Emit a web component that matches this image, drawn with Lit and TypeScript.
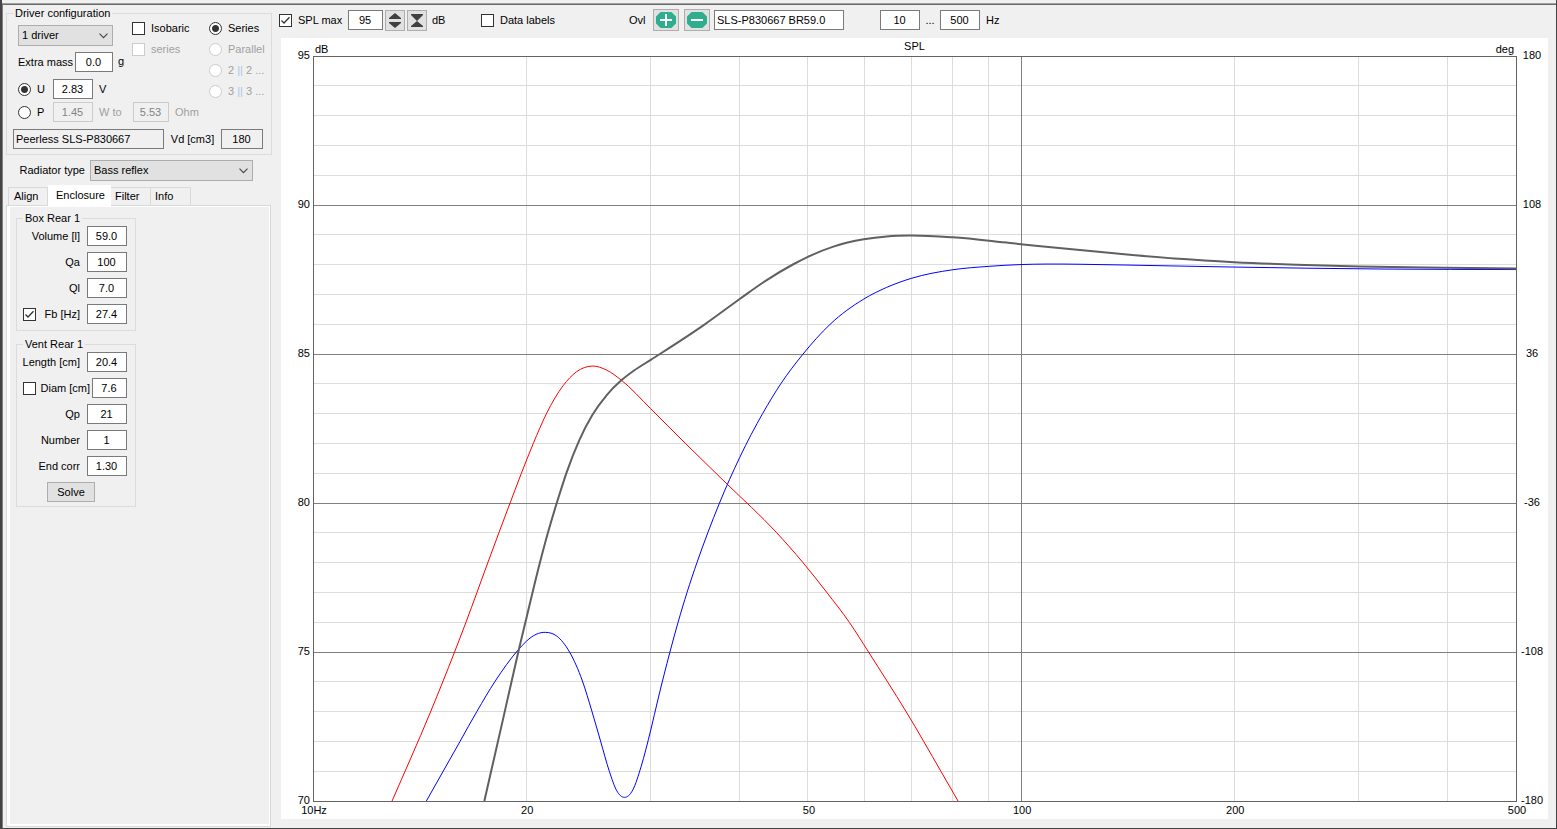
import { LitElement, html, svg, css } from "lit";
import { customElement, property } from "lit/decorators.js";

type Point = [number, number];

const F_MIN = 10;
const F_MAX = 500;
const SPL_MIN = 70;
const SPL_MAX = 95;

const xPct = (f: number) => `${(Math.log10(f / F_MIN) / Math.log10(F_MAX / F_MIN)) * 100}%`;
const yPct = (db: number) => `${((SPL_MAX - db) / (SPL_MAX - SPL_MIN)) * 100}%`;

/* Curve samples, in the units of the curve layer's viewBox. */
const PORT: Point[] = [
  [392, 801], [430, 713], [454.5, 652], [466, 622], [488, 562], [499, 532.3], [510, 503], [521.3, 473.3],
  [533.3, 443.3], [546.7, 413], [563, 385.7], [576.5, 371.7], [592, 366], [606.5, 370], [621.5, 380.3],
  [650.5, 408.5], [685, 443], [727, 484], [776.3, 532.3], [802.7, 562.3], [826.7, 592.3],
  [849.3, 622.3], [868.7, 652.3], [887.5, 681.8], [906, 711.5], [941, 771.5], [958, 801],
];
const CONE: Point[] = [
  [426.3, 801], [460, 741.3], [476.9, 711.3], [495, 681.3], [518, 650], [526.5, 641],
  [536, 634.3], [545.5, 632.3], [556.7, 636], [569.5, 652], [582.4, 681], [591.8, 711], [600.5, 741],
  [609.3, 771.3], [616.7, 790.7], [624.5, 797.3], [632.7, 790], [641, 766.7], [650.7, 730], [658, 699],
  [669.8, 652.3], [678, 622.3], [687, 592.3], [697, 562.3], [707.9, 532.3], [719.3, 503.3],
  [739.7, 457.3], [762.7, 413.3], [780.7, 383.8], [803, 354], [830, 324.3], [863.7, 299],
  [886.7, 287.3], [911.3, 278.3], [952.7, 269.7], [988.7, 266.3], [1021, 264.5], [1046, 264], [1080, 264.2],
  [1127, 265], [1168, 265.8], [1234, 267], [1311, 268.2], [1385, 269], [1516, 269.5],
];
const TOTAL: Point[] = [
  [484.3, 801], [504.3, 713.3], [518.7, 650], [526.7, 616.7], [539.7, 563.3], [548, 532.3], [556.7, 503],
  [566.7, 472], [579.3, 440], [592.3, 415], [606.7, 395], [621.3, 380.3], [634, 370.5], [650.7, 359.8],
  [703.3, 325.3], [739.7, 298.9], [766.7, 280], [793.3, 264.2], [807.3, 257], [833.3, 246.6], [863.7, 239.3],
  [886.7, 236.4], [910, 235.5], [952.7, 237.3], [1010, 243], [1072, 249.3], [1127, 254.5], [1179, 258.8],
  [1234, 262.1], [1296.5, 264.7], [1359, 266.4], [1447, 267.7], [1516, 268.5],
];

/* Cubic path whose slope at each sample is that of the parabola through its neighbours. */
function smooth(p: Point[]): string {
  const n = p.length;
  const secant = (i: number) => (p[i + 1][1] - p[i][1]) / (p[i + 1][0] - p[i][0]);
  const slope = (i: number) => {
    if (i === 0) return secant(0);
    if (i === n - 1) return secant(n - 2);
    const before = p[i][0] - p[i - 1][0];
    const after = p[i + 1][0] - p[i][0];
    return (secant(i - 1) * after + secant(i) * before) / (before + after);
  };
  let d = `M${p[0][0]} ${p[0][1]}`;
  for (let i = 0; i < n - 1; i++) {
    const [bx, by] = p[i];
    const [cx, cy] = p[i + 1];
    const third = (cx - bx) / 3;
    d += `C${bx + third} ${by + slope(i) * third} ${cx - third} ${cy - slope(i + 1) * third} ${cx} ${cy}`;
  }
  return d;
}

const controls = css`
  * { box-sizing: border-box; }
  input, button, select { font: inherit; color: inherit; margin: 0; border-radius: 0; }
  label { white-space: nowrap; }
  .row { display: flex; align-items: center; }
  .field {
    flex: none;
    height: 20px;
    width: 40px;
    padding: 0 1px 0 0;
    border: 1px solid #7a7a7a;
    background: #fff;
    text-align: center;
    outline: none;
  }
  .field.text { text-align: left; padding: 0 2px; }
  .field[readonly] { background: #f0f0f0; }
  .field:disabled { background: #f0f0f0; border-color: #ccc; color: #838383; }
  .tick, .dot {
    appearance: none;
    flex: none;
    width: 13px;
    height: 13px;
    border: 1px solid #333;
    background: #fff;
  }
  .dot { border-radius: 50%; }
  .dot:checked { background: radial-gradient(circle, #333 0 3px, #fff 4px); }
  .tick:checked {
    background: #fff url('data:image/svg+xml,<svg xmlns="http://www.w3.org/2000/svg" viewBox="0 0 11 11"><path d="M1.5 5.5L4 8L9.5 2.3" fill="none" stroke="%23333" stroke-width="1.3"/></svg>');
  }
  .tick:disabled, .dot:disabled { border-color: #ccc; }
  .push { border: 1px solid #adadad; background: #e1e1e1; padding: 0; }
  .select {
    appearance: none;
    flex: none;
    height: 21px;
    border: 1px solid #adadad;
    padding: 0 18px 0 3px;
    background: #e1e1e1 url('data:image/svg+xml,<svg xmlns="http://www.w3.org/2000/svg" width="9" height="6" viewBox="0 0 9 6"><path d="M0.5 0.7L4.5 4.7L8.5 0.7" fill="none" stroke="%23444" stroke-width="1.1"/></svg>') no-repeat right 4px center;
  }
`;

@customElement("driver-panel")
class DriverPanel extends LitElement {
  static styles = [controls, css`
    :host { display: block; }
    .group { margin: 0; min-width: 0; border: 1px solid #dcdcdc; padding: 0 8px 5px 6px; }
    legend { padding: 0 2px; line-height: 13px; height: 13px; }
    .top { display: flex; padding: 5px 0 0 5px; align-items: flex-start; }
    .main { flex: none; width: 95px; display: grid; grid-template-columns: 95px; row-gap: 6px; }
    .main .select { width: 95px; }
    .mass label { width: 57px; }
    .mass .field { width: 38px; }
    .options { flex: none; display: grid; row-gap: 8px; line-height: 13px; margin-top: -3px; }
    .mid { width: 77px; }
    .options .row { gap: 6px; }
    .g { flex: none; margin-left: 5px; width: 14px; padding-top: 30px; }
    .off { color: #a0a0a0; }
    .bars { color: #a9c9e6; }
    .kind { flex: none; width: 35px; gap: 6px; }
    .power { padding-left: 5px; }
    .unit { flex: none; width: 40px; padding-left: 6px; }
    .volt { margin-top: 1px; }
    .watt { margin-top: 3px; }
    .watt .ohm { width: 36px; }
    .id { margin-top: 7px; }
    .id .name { width: 151px; }
    .id .vd { flex: 1; text-align: center; }
    .id .cap { width: 42px; }
  `];

  render() {
    return html`
      <fieldset class="group">
        <legend>Driver configuration</legend>
        <div class="top">
          <div class="main">
            <select class="select" aria-label="Number of drivers"><option>1 driver</option></select>
            <div class="row mass"><label for="mass">Extra mass</label><input id="mass" class="field" value="0.0" /></div>
            <div class="row volt">
              <label class="row kind"><input class="dot" type="radio" name="drive" checked />U</label>
              <input class="field" aria-label="Voltage" value="2.83" /><span class="unit">V</span>
            </div>
          </div>
          <span class="g">g</span>
          <div class="options mid">
            <label class="row"><input class="tick" type="checkbox" />Isobaric</label>
            <label class="row off"><input class="tick" type="checkbox" disabled />series</label>
          </div>
          <div class="options">
            <label class="row"><input class="dot" type="radio" name="wiring" checked />Series</label>
            <label class="row off"><input class="dot" type="radio" name="wiring" disabled />Parallel</label>
            <label class="row off"><input class="dot" type="radio" name="wiring" disabled /><span>2 <span class="bars">||</span> 2 ...</span></label>
            <label class="row off"><input class="dot" type="radio" name="wiring" disabled /><span>3 <span class="bars">||</span> 3 ...</span></label>
          </div>
        </div>
        <div class="row power watt">
          <label class="row kind"><input class="dot" type="radio" name="drive" />P</label>
          <input class="field" aria-label="Power" value="1.45" disabled /><span class="unit off">W to</span>
          <input class="field ohm" aria-label="Load" value="5.53" disabled /><span class="unit off">Ohm</span>
        </div>
        <div class="row id">
          <input class="field text name" aria-label="Driver name" value="Peerless SLS-P830667" readonly />
          <label class="vd" for="vd">Vd [cm3]</label><input id="vd" class="field cap" value="180" readonly />
        </div>
      </fieldset>`;
  }
}

@customElement("enclosure-panel")
class EnclosurePanel extends LitElement {
  static styles = [controls, css`
    :host { display: flex; flex-direction: column; }
    .row { justify-content: flex-end; gap: 7px; }
    .type { gap: 5px; margin: 5px 19px 4px 14px; }
    .type .select { width: 163px; }
    .tabs { display: flex; align-items: flex-end; padding-left: 2px; height: 20px; }
    .tab {
      height: 18px;
      width: 40px;
      padding: 0 0 0 4px;
      text-align: left;
      background: #f0f0f0;
      border: 1px solid #d9d9d9;
      border-width: 1px 1px 0 0;
    }
    .tab.first { border-left-width: 1px; padding-left: 5px; }
    .tab.active { height: 21px; width: 63px; background: #fff; border-color: #fff; padding: 0 0 2px 8px; margin-bottom: -1px; z-index: 1; }
    .sheet { flex: 1; border: 1px solid #d9d9d9; background: #fff; padding: 1px 1px 2px 3px; margin-right: 1px; display: flex; }
    .inner { flex: 1; background: #f0f0f0; padding: 5px 6px; display: flex; flex-direction: column; gap: 7px; }
    .group { margin: 0; min-width: 0; width: 120px; border: 1px solid #dcdcdc; padding: 1px 8px 6px; }
    .group.vent { padding-bottom: 4px; }
    .list { display: grid; grid-template-columns: 100%; row-gap: 6px; }
    legend { margin-left: -2px; padding: 0 2px; line-height: 13px; height: 13px; }
    .row.choice { gap: 2px; margin-left: -2px; }
    .choice .name { flex: 1; text-align: right; }
    .choice.fb .name { padding-right: 5px; }
    .choice .short { width: 35px; }
    .solve { width: 48px; height: 20px; margin-left: 22px; }
  `];

  private line(id: string, text: string, value: string) {
    return html`<div class="row"><label for=${id}>${text}</label><input id=${id} class="field" value=${value} /></div>`;
  }

  render() {
    return html`
      <div class="row type">
        <label for="radiator">Radiator type</label>
        <select id="radiator" class="select"><option>Bass reflex</option></select>
      </div>
      <div class="tabs" role="tablist">
        <button class="tab first" role="tab">Align</button>
        <button class="tab active" role="tab" aria-selected="true">Enclosure</button>
        <button class="tab" role="tab">Filter</button>
        <button class="tab" role="tab">Info</button>
      </div>
      <div class="sheet"><div class="inner">
        <fieldset class="group">
          <legend>Box Rear 1</legend>
          <div class="list">
            ${this.line("vol", "Volume [l]", "59.0")}
            ${this.line("qa", "Qa", "100")}
            ${this.line("ql", "Ql", "7.0")}
            <div class="row choice fb">
              <input class="tick" type="checkbox" aria-label="Tune by Fb" checked />
              <label class="name" for="fb">Fb [Hz]</label><input id="fb" class="field" value="27.4" />
            </div>
          </div>
        </fieldset>
        <fieldset class="group vent">
          <legend>Vent Rear 1</legend>
          <div class="list">
            ${this.line("len", "Length [cm]", "20.4")}
            <div class="row choice">
              <input class="tick" type="checkbox" aria-label="Tune by diameter" />
              <label class="name" for="diam">Diam [cm]</label><input id="diam" class="field short" value="7.6" />
            </div>
            ${this.line("qp", "Qp", "21")}
            ${this.line("num", "Number", "1")}
            ${this.line("end", "End corr", "1.30")}
            <button class="push solve">Solve</button>
          </div>
        </fieldset>
      </div></div>`;
  }
}

@customElement("chart-toolbar")
class ChartToolbar extends LitElement {
  static styles = [controls, css`
    :host { display: flex; align-items: center; height: 30px; }
    label.row { gap: 6px; }
    .max { width: 69px; }
    .spl { width: 35px; }
    .push { display: grid; place-items: center; width: 20px; height: 21px; margin-left: 2px; }
    .push.wide { width: 26px; height: 22px; margin: 0 5px 0 0; }
    .unit { width: 54px; padding-left: 5px; }
    .labels { width: 148px; }
    .ovl { width: 24px; }
    .overlay { width: 130px; margin: 0 36px 0 -1px; }
    .to { width: 20px; text-align: center; }
    .hz { padding-left: 6px; }
  `];

  render() {
    return html`
      <label class="row max"><input class="tick" type="checkbox" checked />SPL max</label>
      <input class="field spl" aria-label="SPL maximum" value="95" />
      <button class="push" aria-label="Expand range">
        <svg width="14" height="17" viewBox="0 0 14 17"><path d="M7 1L13 6V7H1V6ZM1 10H13V11L7 16L1 11Z" fill="#404040" /></svg>
      </button>
      <button class="push" aria-label="Compress range">
        <svg width="14" height="17" viewBox="0 0 14 17"><path d="M1 2H13V3L7 9L13 14V15H1V14L7 9L1 3Z" fill="#404040" /></svg>
      </button>
      <span class="unit">dB</span>
      <label class="row labels"><input class="tick" type="checkbox" />Data labels</label>
      <span class="ovl">Ovl</span>
      <button class="push wide" aria-label="Add overlay">
        <svg width="22" height="18" viewBox="0 0 22 18"><path d="M6 2H16L20 6V12L16 16H6L2 12V6Z" fill="#2fae8f" stroke="#2fae8f" stroke-width="2" stroke-linejoin="round" /><path d="M5 9H17M11 3V15" stroke="#fff" stroke-width="2" /></svg>
      </button>
      <button class="push wide" aria-label="Remove overlay">
        <svg width="22" height="18" viewBox="0 0 22 18"><path d="M6 2H16L20 6V12L16 16H6L2 12V6Z" fill="#2fae8f" stroke="#2fae8f" stroke-width="2" stroke-linejoin="round" /><path d="M5 9H17" stroke="#fff" stroke-width="2" /></svg>
      </button>
      <input class="field text overlay" aria-label="Overlay name" value="SLS-P830667 BR59.0" />
      <input class="field" aria-label="Lowest frequency" value="10" />
      <span class="to">...</span>
      <input class="field" aria-label="Highest frequency" value="500" />
      <span class="hz">Hz</span>`;
  }
}

@customElement("spl-chart")
class SplChart extends LitElement {
  static styles = css`
    :host { display: flex; background: #fff; padding: 18px 32px; }
    .plot { flex: 1; width: 100%; min-height: 0; overflow: visible; font-size: 11px; }
    .minor { stroke: #dcdcdc; shape-rendering: crispEdges; }
    .major { stroke: #808080; shape-rendering: crispEdges; }
    .frame { fill: none; stroke: #646464; shape-rendering: crispEdges; }
    .curve { fill: none; vector-effect: non-scaling-stroke; }
    .port { stroke: #f00; }
    .cone { stroke: #00f; }
    .total { stroke: #606060; stroke-width: 2px; }
    .end { text-anchor: end; }
    .mid { text-anchor: middle; }
  `;

  @property({ type: Number }) step = 5;

  render() {
    const minorF = [20, 30, 40, 50, 60, 70, 80, 90, 200, 300, 400];
    const dbs = Array.from({ length: SPL_MAX - SPL_MIN - 1 }, (_, i) => SPL_MIN + 1 + i);
    const isMajor = (v: number) => v % this.step === 0;
    const hLine = (v: number, cls: string) =>
      svg`<line class=${cls} x1="0" x2="100%" y1=${yPct(v)} y2=${yPct(v)} />`;
    const vLine = (f: number, cls: string) =>
      svg`<line class=${cls} y1="0" y2="100%" x1=${xPct(f)} x2=${xPct(f)} />`;
    return html`
      <svg class="plot" role="img" aria-label="SPL">
        <g transform="translate(0.05 0.05)">
          ${dbs.filter((v) => !isMajor(v)).map((v) => hLine(v, "minor"))}
          ${minorF.map((f) => vLine(f, "minor"))}
          ${dbs.filter(isMajor).map((v) => hLine(v, "major"))}
          ${vLine(100, "major")}
          <svg width="100%" height="100%" viewBox="313 56 1203 745" preserveAspectRatio="none">
            <path class="curve port" d=${smooth(PORT)} />
            <path class="curve cone" d=${smooth(CONE)} />
            <path class="curve total" d=${smooth(TOTAL)} />
          </svg>
          <rect class="frame" width="100%" height="100%" />
        </g>
        <text x="0" dx="2" y="-3">dB</text>
        <text class="mid" x="50%" y="-6">SPL</text>
        <text class="end" x="100%" dx="-2" y="-3">deg</text>
        ${[95, 90, 85, 80, 75, 70].map((v) => svg`<text class="end" x="0" dx="-3" y=${yPct(v)} dy="3">${v}</text>`)}
        ${[180, 108, 36, -36, -108, -180].map((v, i) => svg`<text class="mid" x="100%" dx="16" y=${yPct(95 - i * 5)} dy="3">${v}</text>`)}
        ${[10, 20, 50, 100, 200, 500].map((f) => svg`<text class="mid" x=${xPct(f)} y="100%" dx="1" dy="13">${f}${f === 10 ? "Hz" : ""}</text>`)}
      </svg>`;
  }
}

@customElement("app-root")
class AppRoot extends LitElement {
  static styles = css`
    :host {
      display: grid;
      grid-template-columns: 270px 1fr;
      box-sizing: border-box;
      min-height: 100vh;
      padding-top: 3px;
      background: #f0f0f0;
      color: #000;
      font: 11px/13px "Liberation Sans", Arial, sans-serif;
      border: 0 solid #444;
      border-width: 0 1px 1px 2px;
    }
    .side, .view { border-top: 1px solid #a0a0a0; box-shadow: inset 0 1px #696969; display: flex; flex-direction: column; }
    .side { border-left: 1px solid #808080; padding: 3px 0 1px 3px; }
    .side enclosure-panel { flex: 1; }
    .view { padding: 1px 8px 9px 9px; }
    .view chart-toolbar { padding: 0 0 3px; margin-left: -2px; }
    .view spl-chart { flex: 1; min-height: 400px; }
  `;

  render() {
    return html`
      <aside class="side"><driver-panel></driver-panel><enclosure-panel></enclosure-panel></aside>
      <main class="view"><chart-toolbar></chart-toolbar><spl-chart></spl-chart></main>`;
  }
}
